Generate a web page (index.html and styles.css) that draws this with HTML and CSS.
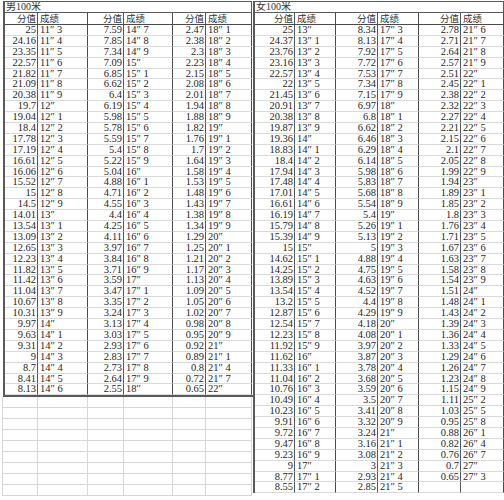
FILE: index.html
```html
<!DOCTYPE html>
<html lang="zh">
<head>
<meta charset="utf-8">
<title>100米评分表</title>
<link rel="stylesheet" href="styles.css">
</head>
<body>
<div class="sheet">
  <div class="side side-left">
    <div class="tbl tbl-men">
      <div class="title">男100米</div>
      <div class="h v">分值</div><div class="h t">成绩</div><div class="h v">分值</div><div class="h t">成绩</div><div class="h v">分值</div><div class="h t">成绩</div>
      <div class="v">25</div><div class="t">11″ 3</div><div class="v">7.59</div><div class="t">14″ 7</div><div class="v">2.47</div><div class="t">18″ 1</div>
      <div class="v">24.16</div><div class="t">11″ 4</div><div class="v">7.85</div><div class="t">14″ 8</div><div class="v">2.38</div><div class="t">18″ 2</div>
      <div class="v">23.35</div><div class="t">11″ 5</div><div class="v">7.34</div><div class="t">14″ 9</div><div class="v">2.3</div><div class="t">18″ 3</div>
      <div class="v">22.57</div><div class="t">11″ 6</div><div class="v">7.09</div><div class="t">15″</div><div class="v">2.23</div><div class="t">18″ 4</div>
      <div class="v">21.82</div><div class="t">11″ 7</div><div class="v">6.85</div><div class="t">15″ 1</div><div class="v">2.15</div><div class="t">18″ 5</div>
      <div class="v">21.09</div><div class="t">11″ 8</div><div class="v">6.62</div><div class="t">15″ 2</div><div class="v">2.08</div><div class="t">18″ 6</div>
      <div class="v">20.38</div><div class="t">11″ 9</div><div class="v">6.4</div><div class="t">15″ 3</div><div class="v">2.01</div><div class="t">18″ 7</div>
      <div class="v">19.7</div><div class="t">12″</div><div class="v">6.19</div><div class="t">15″ 4</div><div class="v">1.94</div><div class="t">18″ 8</div>
      <div class="v">19.04</div><div class="t">12″ 1</div><div class="v">5.98</div><div class="t">15″ 5</div><div class="v">1.88</div><div class="t">18″ 9</div>
      <div class="v">18.4</div><div class="t">12″ 2</div><div class="v">5.78</div><div class="t">15″ 6</div><div class="v">1.82</div><div class="t">19″</div>
      <div class="v">17.78</div><div class="t">12″ 3</div><div class="v">5.59</div><div class="t">15″ 7</div><div class="v">1.76</div><div class="t">19″ 1</div>
      <div class="v">17.19</div><div class="t">12″ 4</div><div class="v">5.4</div><div class="t">15″ 8</div><div class="v">1.7</div><div class="t">19″ 2</div>
      <div class="v">16.61</div><div class="t">12″ 5</div><div class="v">5.22</div><div class="t">15″ 9</div><div class="v">1.64</div><div class="t">19″ 3</div>
      <div class="v">16.06</div><div class="t">12″ 6</div><div class="v">5.04</div><div class="t">16″</div><div class="v">1.58</div><div class="t">19″ 4</div>
      <div class="v">15.52</div><div class="t">12″ 7</div><div class="v">4.88</div><div class="t">16″ 1</div><div class="v">1.53</div><div class="t">19″ 5</div>
      <div class="v">15</div><div class="t">12″ 8</div><div class="v">4.71</div><div class="t">16″ 2</div><div class="v">1.48</div><div class="t">19″ 6</div>
      <div class="v">14.5</div><div class="t">12″ 9</div><div class="v">4.55</div><div class="t">16″ 3</div><div class="v">1.43</div><div class="t">19″ 7</div>
      <div class="v">14.01</div><div class="t">13″</div><div class="v">4.4</div><div class="t">16″ 4</div><div class="v">1.38</div><div class="t">19″ 8</div>
      <div class="v">13.54</div><div class="t">13″ 1</div><div class="v">4.25</div><div class="t">16″ 5</div><div class="v">1.34</div><div class="t">19″ 9</div>
      <div class="v">13.09</div><div class="t">13″ 2</div><div class="v">4.11</div><div class="t">16″ 6</div><div class="v">1.29</div><div class="t">20″</div>
      <div class="v">12.65</div><div class="t">13″ 3</div><div class="v">3.97</div><div class="t">16″ 7</div><div class="v">1.25</div><div class="t">20″ 1</div>
      <div class="v">12.23</div><div class="t">13″ 4</div><div class="v">3.84</div><div class="t">16″ 8</div><div class="v">1.21</div><div class="t">20″ 2</div>
      <div class="v">11.82</div><div class="t">13″ 5</div><div class="v">3.71</div><div class="t">16″ 9</div><div class="v">1.17</div><div class="t">20″ 3</div>
      <div class="v">11.42</div><div class="t">13″ 6</div><div class="v">3.59</div><div class="t">17″</div><div class="v">1.13</div><div class="t">20″ 4</div>
      <div class="v">11.04</div><div class="t">13″ 7</div><div class="v">3.47</div><div class="t">17″ 1</div><div class="v">1.09</div><div class="t">20″ 5</div>
      <div class="v">10.67</div><div class="t">13″ 8</div><div class="v">3.35</div><div class="t">17″ 2</div><div class="v">1.05</div><div class="t">20″ 6</div>
      <div class="v">10.31</div><div class="t">13″ 9</div><div class="v">3.24</div><div class="t">17″ 3</div><div class="v">1.02</div><div class="t">20″ 7</div>
      <div class="v">9.97</div><div class="t">14″</div><div class="v">3.13</div><div class="t">17″ 4</div><div class="v">0.98</div><div class="t">20″ 8</div>
      <div class="v">9.63</div><div class="t">14″ 1</div><div class="v">3.03</div><div class="t">17″ 5</div><div class="v">0.95</div><div class="t">20″ 9</div>
      <div class="v">9.31</div><div class="t">14″ 2</div><div class="v">2.93</div><div class="t">17″ 6</div><div class="v">0.92</div><div class="t">21″</div>
      <div class="v">9</div><div class="t">14″ 3</div><div class="v">2.83</div><div class="t">17″ 7</div><div class="v">0.89</div><div class="t">21″ 1</div>
      <div class="v">8.7</div><div class="t">14″ 4</div><div class="v">2.73</div><div class="t">17″ 8</div><div class="v">0.8</div><div class="t">21″ 4</div>
      <div class="v">8.41</div><div class="t">14″ 5</div><div class="v">2.64</div><div class="t">17″ 9</div><div class="v">0.72</div><div class="t">21″ 7</div>
      <div class="v">8.13</div><div class="t">14″ 6</div><div class="v">2.55</div><div class="t">18″</div><div class="v">0.65</div><div class="t">22″</div>
    </div>
    <div class="filler">
      <div></div><div></div><div></div><div></div><div></div><div></div>
      <div></div><div></div><div></div><div></div><div></div><div></div>
      <div></div><div></div><div></div><div></div><div></div><div></div>
      <div></div><div></div><div></div><div></div><div></div><div></div>
      <div></div><div></div><div></div><div></div><div></div><div></div>
      <div></div><div></div><div></div><div></div><div></div><div></div>
      <div></div><div></div><div></div><div></div><div></div><div></div>
      <div></div><div></div><div></div><div></div><div></div><div></div>
      <div></div><div></div><div></div><div></div><div></div><div></div>
    </div>
  </div>
  <div class="side side-right">
    <div class="tbl tbl-women">
      <div class="title">女100米</div>
      <div class="h v">分值</div><div class="h t">成绩</div><div class="h v">分值</div><div class="h t">成绩</div><div class="h v">分值</div><div class="h t">成绩</div>
      <div class="v">25</div><div class="t">13″</div><div class="v">8.34</div><div class="t">17″ 3</div><div class="v">2.78</div><div class="t">21″ 6</div>
      <div class="v">24.37</div><div class="t">13″ 1</div><div class="v">8.13</div><div class="t">17″ 4</div><div class="v">2.71</div><div class="t">21″ 7</div>
      <div class="v">23.76</div><div class="t">13″ 2</div><div class="v">7.92</div><div class="t">17″ 5</div><div class="v">2.64</div><div class="t">21″ 8</div>
      <div class="v">23.16</div><div class="t">13″ 3</div><div class="v">7.72</div><div class="t">17″ 6</div><div class="v">2.57</div><div class="t">21″ 9</div>
      <div class="v">22.57</div><div class="t">13″ 4</div><div class="v">7.53</div><div class="t">17″ 7</div><div class="v">2.51</div><div class="t">22″</div>
      <div class="v">22</div><div class="t">13″ 5</div><div class="v">7.34</div><div class="t">17″ 8</div><div class="v">2.45</div><div class="t">22″ 1</div>
      <div class="v">21.45</div><div class="t">13″ 6</div><div class="v">7.15</div><div class="t">17″ 9</div><div class="v">2.38</div><div class="t">22″ 2</div>
      <div class="v">20.91</div><div class="t">13″ 7</div><div class="v">6.97</div><div class="t">18″</div><div class="v">2.32</div><div class="t">22″ 3</div>
      <div class="v">20.38</div><div class="t">13″ 8</div><div class="v">6.8</div><div class="t">18″ 1</div><div class="v">2.27</div><div class="t">22″ 4</div>
      <div class="v">19.87</div><div class="t">13″ 9</div><div class="v">6.62</div><div class="t">18″ 2</div><div class="v">2.21</div><div class="t">22″ 5</div>
      <div class="v">19.36</div><div class="t">14″</div><div class="v">6.46</div><div class="t">18″ 3</div><div class="v">2.15</div><div class="t">22″ 6</div>
      <div class="v">18.83</div><div class="t">14″ 1</div><div class="v">6.29</div><div class="t">18″ 4</div><div class="v">2.1</div><div class="t">22″ 7</div>
      <div class="v">18.4</div><div class="t">14″ 2</div><div class="v">6.14</div><div class="t">18″ 5</div><div class="v">2.05</div><div class="t">22″ 8</div>
      <div class="v">17.94</div><div class="t">14″ 3</div><div class="v">5.98</div><div class="t">18″ 6</div><div class="v">1.99</div><div class="t">22″ 9</div>
      <div class="v">17.48</div><div class="t">14″ 4</div><div class="v">5.83</div><div class="t">18″ 7</div><div class="v">1.94</div><div class="t">23″</div>
      <div class="v">17.01</div><div class="t">14″ 5</div><div class="v">5.68</div><div class="t">18″ 8</div><div class="v">1.89</div><div class="t">23″ 1</div>
      <div class="v">16.61</div><div class="t">14″ 6</div><div class="v">5.54</div><div class="t">18″ 9</div><div class="v">1.85</div><div class="t">23″ 2</div>
      <div class="v">16.19</div><div class="t">14″ 7</div><div class="v">5.4</div><div class="t">19″</div><div class="v">1.8</div><div class="t">23″ 3</div>
      <div class="v">15.79</div><div class="t">14″ 8</div><div class="v">5.26</div><div class="t">19″ 1</div><div class="v">1.76</div><div class="t">23″ 4</div>
      <div class="v">15.39</div><div class="t">14″ 9</div><div class="v">5.13</div><div class="t">19″ 2</div><div class="v">1.71</div><div class="t">23″ 5</div>
      <div class="v">15</div><div class="t">15″</div><div class="v">5</div><div class="t">19″ 3</div><div class="v">1.67</div><div class="t">23″ 6</div>
      <div class="v">14.62</div><div class="t">15″ 1</div><div class="v">4.88</div><div class="t">19″ 4</div><div class="v">1.63</div><div class="t">23″ 7</div>
      <div class="v">14.25</div><div class="t">15″ 2</div><div class="v">4.75</div><div class="t">19″ 5</div><div class="v">1.58</div><div class="t">23″ 8</div>
      <div class="v">13.89</div><div class="t">15″ 3</div><div class="v">4.63</div><div class="t">19″ 6</div><div class="v">1.54</div><div class="t">23″ 9</div>
      <div class="v">13.54</div><div class="t">15″ 4</div><div class="v">4.52</div><div class="t">19″ 7</div><div class="v">1.51</div><div class="t">24″</div>
      <div class="v">13.2</div><div class="t">15″ 5</div><div class="v">4.4</div><div class="t">19″ 8</div><div class="v">1.48</div><div class="t">24″ 1</div>
      <div class="v">12.87</div><div class="t">15″ 6</div><div class="v">4.29</div><div class="t">19″ 9</div><div class="v">1.43</div><div class="t">24″ 2</div>
      <div class="v">12.54</div><div class="t">15″ 7</div><div class="v">4.18</div><div class="t">20″</div><div class="v">1.39</div><div class="t">24″ 3</div>
      <div class="v">12.23</div><div class="t">15″ 8</div><div class="v">4.08</div><div class="t">20″ 1</div><div class="v">1.36</div><div class="t">24″ 4</div>
      <div class="v">11.92</div><div class="t">15″ 9</div><div class="v">3.97</div><div class="t">20″ 2</div><div class="v">1.33</div><div class="t">24″ 5</div>
      <div class="v">11.62</div><div class="t">16″</div><div class="v">3.87</div><div class="t">20″ 3</div><div class="v">1.29</div><div class="t">24″ 6</div>
      <div class="v">11.33</div><div class="t">16″ 1</div><div class="v">3.78</div><div class="t">20″ 4</div><div class="v">1.26</div><div class="t">24″ 7</div>
      <div class="v">11.04</div><div class="t">16″ 2</div><div class="v">3.68</div><div class="t">20″ 5</div><div class="v">1.23</div><div class="t">24″ 8</div>
      <div class="v">10.76</div><div class="t">16″ 3</div><div class="v">3.59</div><div class="t">20″ 6</div><div class="v">1.15</div><div class="t">24″ 9</div>
      <div class="v">10.49</div><div class="t">16″ 4</div><div class="v">3.5</div><div class="t">20″ 7</div><div class="v">1.11</div><div class="t">25″ 2</div>
      <div class="v">10.23</div><div class="t">16″ 5</div><div class="v">3.41</div><div class="t">20″ 8</div><div class="v">1.03</div><div class="t">25″ 5</div>
      <div class="v">9.91</div><div class="t">16″ 6</div><div class="v">3.32</div><div class="t">20″ 9</div><div class="v">0.95</div><div class="t">25″ 8</div>
      <div class="v">9.72</div><div class="t">16″ 7</div><div class="v">3.24</div><div class="t">21″</div><div class="v">0.88</div><div class="t">26″ 1</div>
      <div class="v">9.47</div><div class="t">16″ 8</div><div class="v">3.16</div><div class="t">21″ 1</div><div class="v">0.82</div><div class="t">26″ 4</div>
      <div class="v">9.23</div><div class="t">16″ 9</div><div class="v">3.08</div><div class="t">21″ 2</div><div class="v">0.76</div><div class="t">26″ 7</div>
      <div class="v">9</div><div class="t">17″</div><div class="v">3</div><div class="t">21″ 3</div><div class="v">0.7</div><div class="t">27″</div>
      <div class="v">8.77</div><div class="t">17″ 1</div><div class="v">2.93</div><div class="t">21″ 4</div><div class="v">0.65</div><div class="t">27″ 3</div>
      <div class="v">8.55</div><div class="t">17″ 2</div><div class="v">2.85</div><div class="t">21″ 5</div><div class="v"></div><div class="t"></div>
    </div>
  </div>
</div>
</body>
</html>
```

FILE: styles.css
```css
html, body {
  margin: 0;
  padding: 0;
  background: #ffffff;
}

body {
  width: 504px;
  height: 500px;
  overflow: hidden;
  font-family: "Liberation Serif", "Noto Sans CJK SC", serif;
  color: #262626;
}

.sheet {
  display: flex;
  align-items: flex-start;
  padding-top: 1px;
}

.side-left {
  width: 253px;
  padding-left: 3px;
  box-sizing: border-box;
}

.side-right {
  width: 251px;
}

.tbl {
  display: grid;
  grid-template-rows: 12px 12px;
  grid-auto-rows: 10.9px;
  border-left: 2px solid #5a5a5a;
}

.tbl-men {
  grid-template-columns: 33px 50px 36px 49px 33px 46px;
  border-bottom: 2px solid #5a5a5a;
}

.tbl-women {
  grid-template-columns: 40px 41px 42px 41px 42px 43px;
}

.tbl > div {
  box-sizing: border-box;
  overflow: hidden;
  white-space: nowrap;
  font-size: 10.5px;
  line-height: 10px;
}

.tbl > .title {
  grid-column: 1 / -1;
  border-top: 1px solid #5a5a5a;
  border-bottom: 1px solid #5a5a5a;
  border-right: 1px solid #5a5a5a;
  font-family: "Liberation Serif", "Noto Sans CJK SC", sans-serif;
  font-size: 10px;
  line-height: 10px;
  padding-left: 1px;
  color: #333;
}

.tbl > .h {
  font-family: "Liberation Serif", "Noto Sans CJK SC", sans-serif;
  font-size: 9.5px;
  line-height: 10px;
  padding-top: 1px;
  border-bottom: 1px solid #4a4a4a;
  color: #333;
}

.v {
  text-align: right;
  padding-right: 1px;
  border-right: 1.5px solid #555;
  border-bottom: 1px solid #dadada;
}

.t {
  text-align: left;
  padding-left: 2px;
  border-right: 1px solid #4a4a4a;
  border-bottom: 1px solid #dadada;
}

.filler {
  display: grid;
  grid-template-columns: 35px 50px 36px 49px 33px 46px;
  grid-auto-rows: 11px;
  margin-left: -1px;
  border-left: 1px solid #d6d6d6;
}

.filler > div {
  border-right: 1px solid #d6d6d6;
  border-bottom: 1px solid #d6d6d6;
}
```
